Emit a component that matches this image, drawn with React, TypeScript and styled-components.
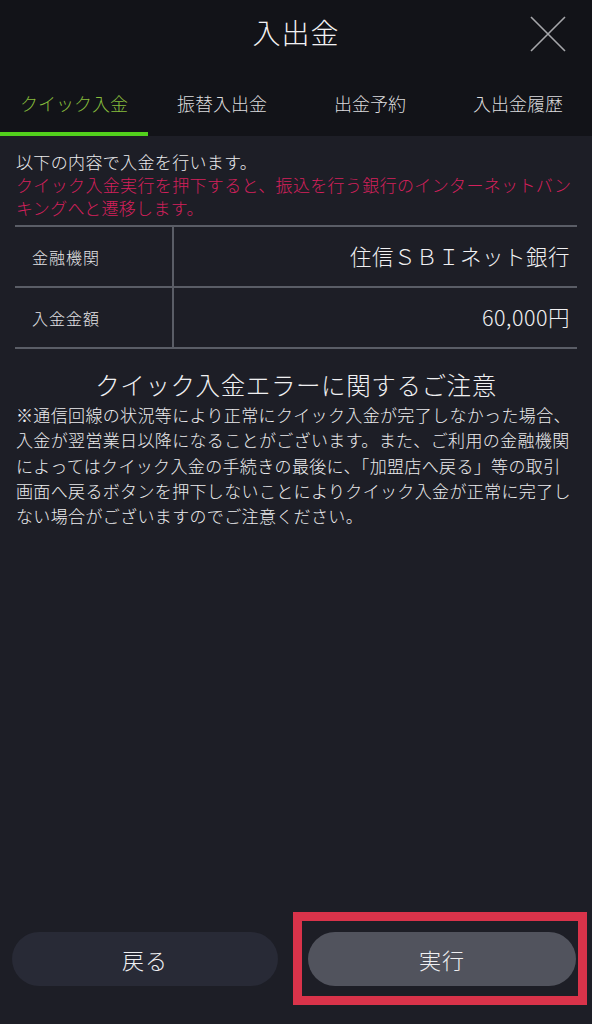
import React from "react";
import styled, { createGlobalStyle } from "styled-components";

const GlobalStyle = createGlobalStyle`
  html, body { margin: 0; padding: 0; background: #1d1e26; }
  body { font-family: "Noto Sans CJK JP", "Noto Sans", sans-serif; font-weight: 300; color: #e8e8ea; }
  * { box-sizing: border-box; }
`;

const Page = styled.div`
  width: 592px;
  height: 1024px;
  display: flex;
  flex-direction: column;
  background: #1d1e26;
  overflow: hidden;
`;

const Header = styled.header`
  background: #121318;
  display: flex;
  flex-direction: column;
`;

const TitleRow = styled.div`
  height: 68px;
  display: grid;
  grid-template-columns: 1fr auto 1fr;
  align-items: center;
`;

const Title = styled.h1`
  grid-column: 2;
  margin: 0;
  padding-bottom: 5px;
  font-size: 28px;
  font-weight: 300;
  color: #f2f2f4;
  letter-spacing: 1px;
  line-height: 1;
`;

const CloseButton = styled.button`
  grid-column: 3;
  justify-self: end;
  margin-right: 26px;
  width: 36px;
  height: 36px;
  padding: 0;
  border: none;
  background: transparent;
  display: flex;
  align-items: center;
  justify-content: center;
`;

const Tabs = styled.nav`
  display: grid;
  grid-template-columns: repeat(4, 148px);
  height: 68px;
`;

const Tab = styled.div<{ $active?: boolean }>`
  display: flex;
  align-items: center;
  justify-content: center;
  padding-top: 5px;
  font-size: 18px;
  color: ${(p) => (p.$active ? "#86bd3c" : "#dcdcde")};
  border-bottom: 4px solid ${(p) => (p.$active ? "#52d11c" : "transparent")};
`;

const Content = styled.main`
  flex: 1;
  padding: 14px 15px 0;
  display: flex;
  flex-direction: column;
`;

const Intro = styled.p`
  margin: 0 0 0 1px;
  font-size: 17px;
  line-height: 23px;
  letter-spacing: 0.35px;
  color: #ececee;
`;

const Warning = styled.span`
  display: block;
  color: #d4205c;
`;

const Table = styled.div`
  margin-top: 6px;
  border-bottom: 2px solid #5a5d66;
`;

const Row = styled.div`
  display: grid;
  grid-template-columns: 159px 1fr;
  height: 61px;
  border-top: 2px solid #5a5d66;
`;

const Label = styled.div`
  display: flex;
  align-items: center;
  padding-left: 17px;
  font-size: 16px;
  letter-spacing: 1px;
  color: #e4e4e6;
  border-right: 2px solid #5a5d66;
`;

const Value = styled.div`
  display: flex;
  align-items: center;
  justify-content: flex-end;
  padding-right: 7px;
  padding-bottom: 2px;
  font-size: 21.5px;
  letter-spacing: 0.5px;
  color: #f0f0f2;
`;

const NoticeTitle = styled.h2`
  margin: 20px 0 0;
  text-align: center;
  font-size: 24.5px;
  font-weight: 300;
  line-height: 32px;
  letter-spacing: 0.6px;
  color: #f0f0f2;
`;

const NoticeBody = styled.p`
  margin: 1px 0 0 1px;
  font-size: 17px;
  line-height: 25.3px;
  letter-spacing: 0.35px;
  color: #ececee;
`;

const Footer = styled.footer`
  display: grid;
  grid-template-columns: 266px 268px;
  column-gap: 30px;
  padding: 0 16px 38px 12px;
`;

const PillButton = styled.button<{ $primary?: boolean }>`
  height: 54px;
  border: none;
  border-radius: 27px;
  background: ${(p) => (p.$primary ? "#51535d" : "#282a36")};
  color: #f0f0f2;
  font-family: inherit;
  font-weight: 300;
  font-size: 22px;
  letter-spacing: 1px;
`;

const Highlight = styled.div`
  position: relative;
  display: flex;
  &::after {
    content: "";
    position: absolute;
    left: -15px;
    top: -20px;
    right: -11px;
    bottom: -19px;
    border: 9px solid #d9334a;
    pointer-events: none;
  }
  & > button { flex: 1; }
`;

export default function App() {
  return (
    <Page>
      <GlobalStyle />
      <Header>
        <TitleRow>
          <Title>入出金</Title>
          <CloseButton aria-label="閉じる">
            <svg width="36" height="36" viewBox="0 0 36 36">
              <path d="M1 1 L35 35 M35 1 L1 35" stroke="#a6a7ab" strokeWidth="1.6" fill="none" />
            </svg>
          </CloseButton>
        </TitleRow>
        <Tabs>
          <Tab $active>クイック入金</Tab>
          <Tab>振替入出金</Tab>
          <Tab>出金予約</Tab>
          <Tab>入出金履歴</Tab>
        </Tabs>
      </Header>
      <Content>
        <Intro>
          以下の内容で入金を行います。
          <Warning>
            クイック入金実行を押下すると、振込を行う銀行のインターネットバンキングへと遷移します。
          </Warning>
        </Intro>
        <Table>
          <Row>
            <Label>金融機関</Label>
            <Value>住信ＳＢＩネット銀行</Value>
          </Row>
          <Row>
            <Label>入金金額</Label>
            <Value>60,000円</Value>
          </Row>
        </Table>
        <NoticeTitle>クイック入金エラーに関するご注意</NoticeTitle>
        <NoticeBody>
          ※通信回線の状況等により正常にクイック入金が完了しなかった場合、入金が翌営業日以降になることがございます。また、ご利用の金融機関によってはクイック入金の手続きの最後に、「加盟店へ戻る」等の取引画面へ戻るボタンを押下しないことによりクイック入金が正常に完了しない場合がございますのでご注意ください。
        </NoticeBody>
      </Content>
      <Footer>
        <PillButton>戻る</PillButton>
        <Highlight>
          <PillButton $primary>実行</PillButton>
        </Highlight>
      </Footer>
    </Page>
  );
}
